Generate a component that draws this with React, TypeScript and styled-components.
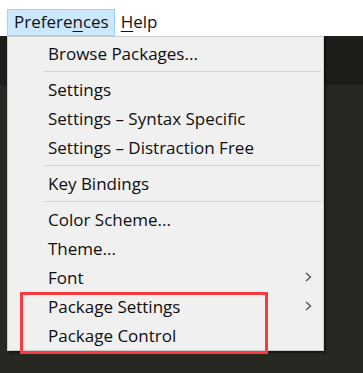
import React from "react";
import styled, { createGlobalStyle } from "styled-components";

const GlobalStyle = createGlobalStyle`
  html, body { margin: 0; padding: 0; background: #272822; }
  body { font-family: "Open Sans", "Noto Sans", sans-serif; }
`;

const Page = styled.div`
  position: relative;
  width: 363px;
  height: 373px;
  display: flex;
  flex-direction: column;
  overflow: hidden;
  background: #272822;
`;

const MenuBar = styled.div`
  height: 36px;
  box-sizing: border-box;
  padding: 9px 0 0 7px;
  background: #ffffff;
  display: flex;
  align-items: stretch;
`;

const TopItem = styled.div<{ $active?: boolean }>`
  box-sizing: border-box;
  height: 27px;
  padding: 0 5px 0 6px;
  border: 1px solid ${(p) => (p.$active ? "#99d1ff" : "transparent")};
  background: ${(p) => (p.$active ? "#cce8ff" : "transparent")};
  font-size: 17px;
  line-height: 24px;
  color: #111;
  margin-right: -1px;
`;

const Mn = styled.span`
  text-decoration: underline;
  text-underline-offset: 3px;
  text-decoration-thickness: 1px;
`;

const Workspace = styled.div`
  flex: 1;
  display: flex;
  flex-direction: column;
`;

const TabStrip = styled.div`
  height: 49px;
  background: #1c1c18;
`;

const Editor = styled.div`
  flex: 1;
  background: #272822;
`;

const Dropdown = styled.div`
  position: absolute;
  left: 7px;
  top: 36px;
  width: 317px;
  box-sizing: border-box;
  padding: 2px 0 0;
  background: #f0f0f0;
  border: 1px solid #cbcbcb;
  box-shadow: 2px 2px 2px rgba(0, 0, 0, 0.45);
  display: flex;
  flex-direction: column;
`;

const Item = styled.div`
  height: 29px;
  display: flex;
  align-items: center;
  justify-content: space-between;
  padding: 0 11px 1px 40px;
  box-sizing: border-box;
  font-size: 17px;
  color: #0e0e0e;
  white-space: nowrap;
`;

const Separator = styled.div`
  height: 1px;
  margin: 3px 2px 3px 36px;
  background: #d5d5d5;
`;

const Highlight = styled.div`
  position: absolute;
  left: 20px;
  top: 292px;
  width: 248px;
  height: 62px;
  box-sizing: border-box;
  border: 3px solid #f93c3f;
  pointer-events: none;
`;

const Chevron = () => (
  <svg width="7" height="10" viewBox="0 0 7 10">
    <polyline points="1,1 5.5,5 1,9" fill="none" stroke="#555" strokeWidth="1.4" />
  </svg>
);

type Entry = { label?: string; sub?: boolean; sep?: boolean };

const entries: Entry[] = [
  { label: "Browse Packages..." },
  { sep: true },
  { label: "Settings" },
  { label: "Settings – Syntax Specific" },
  { label: "Settings – Distraction Free" },
  { sep: true },
  { label: "Key Bindings" },
  { sep: true },
  { label: "Color Scheme..." },
  { label: "Theme..." },
  { label: "Font", sub: true },
  { label: "Package Settings", sub: true },
  { label: "Package Control" },
];

export default function App() {
  return (
    <>
      <GlobalStyle />
      <Page>
        <MenuBar>
          <TopItem $active>
            Prefere<Mn>n</Mn>ces
          </TopItem>
          <TopItem>
            <Mn>H</Mn>elp
          </TopItem>
        </MenuBar>
        <Workspace>
          <TabStrip />
          <Editor />
        </Workspace>
        <Dropdown>
          {entries.map((e, i) =>
            e.sep ? (
              <Separator key={i} />
            ) : (
              <Item key={i}>
                <span>{e.label}</span>
                {e.sub && <Chevron />}
              </Item>
            )
          )}
        </Dropdown>
        <Highlight />
      </Page>
    </>
  );
}
